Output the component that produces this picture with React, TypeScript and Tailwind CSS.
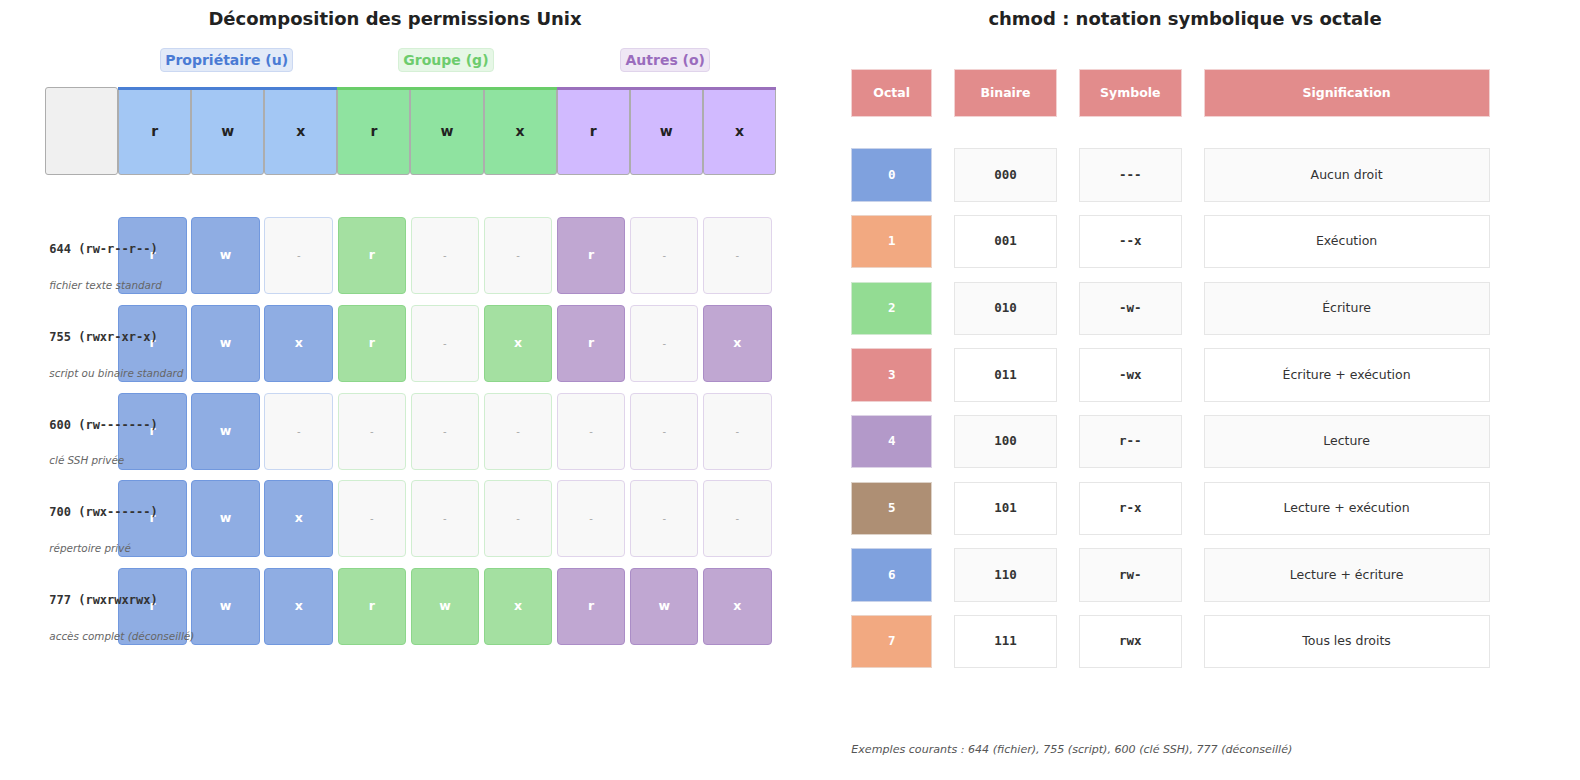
import React from 'react';

type Group = 'u' | 'g' | 'o';

const groups: { key: Group; label: string; letters: string[] }[] = [
  { key: 'u', label: 'Propriétaire (u)', letters: ['r', 'w', 'x'] },
  { key: 'g', label: 'Groupe (g)', letters: ['r', 'w', 'x'] },
  { key: 'o', label: 'Autres (o)', letters: ['r', 'w', 'x'] },
];

const pillStyles: Record<Group, string> = {
  u: 'bg-[#e2eaf8] border-[#cbd8f2] text-[#4a7bd4]',
  g: 'bg-[#e6f7e6] border-[#d6f0d6] text-[#6dcc6d]',
  o: 'bg-[#efe7f5] border-[#e0d4eb] text-[#9a6cbd]',
};

const headCell: Record<Group, string> = {
  u: 'bg-[#a3c7f4]',
  g: 'bg-[#8fe3a0]',
  o: 'bg-[#d1baff]',
};

const topLine: Record<Group, string> = {
  u: 'bg-[#4a7fd4]',
  g: 'bg-[#6acd6a]',
  o: 'bg-[#9a70bc]',
};

const onCell: Record<Group, string> = {
  u: 'bg-[#8fade3] border-[#7198de]',
  g: 'bg-[#a4e0a1] border-[#8dd68b]',
  o: 'bg-[#c0a7d2] border-[#ab8dc7]',
};

const offCell: Record<Group, string> = {
  u: 'bg-[#f8f8f8] border-[#c8d7f2]',
  g: 'bg-[#f8f8f8] border-[#d0eed0]',
  o: 'bg-[#f8f8f8] border-[#e0d4eb]',
};

const examples = [
  { mode: '644 (rw-r--r--)', desc: 'fichier texte standard', bits: 'rw-r--r--' },
  { mode: '755 (rwxr-xr-x)', desc: 'script ou binaire standard', bits: 'rwxr-xr-x' },
  { mode: '600 (rw-------)', desc: 'clé SSH privée', bits: 'rw-------' },
  { mode: '700 (rwx------)', desc: 'répertoire privé', bits: 'rwx------' },
  { mode: '777 (rwxrwxrwx)', desc: 'accès complet (déconseillé)', bits: 'rwxrwxrwx' },
];

const octals = [
  { n: '0', bin: '000', sym: '---', meaning: 'Aucun droit', color: 'bg-[#7fa1de] border-[#c9d3ea]' },
  { n: '1', bin: '001', sym: '--x', meaning: 'Exécution', color: 'bg-[#f2a981] border-[#ecd3c6]' },
  { n: '2', bin: '010', sym: '-w-', meaning: 'Écriture', color: 'bg-[#93dc93] border-[#cfe9cf]' },
  { n: '3', bin: '011', sym: '-wx', meaning: 'Écriture + exécution', color: 'bg-[#e28c8c] border-[#efd0d0]' },
  { n: '4', bin: '100', sym: 'r--', meaning: 'Lecture', color: 'bg-[#b399c9] border-[#ddd3e6]' },
  { n: '5', bin: '101', sym: 'r-x', meaning: 'Lecture + exécution', color: 'bg-[#ae8f74] border-[#ddd2c8]' },
  { n: '6', bin: '110', sym: 'rw-', meaning: 'Lecture + écriture', color: 'bg-[#7fa1de] border-[#c9d3ea]' },
  { n: '7', bin: '111', sym: 'rwx', meaning: 'Tous les droits', color: 'bg-[#f2a981] border-[#ecd3c6]' },
];

const groupOf = (i: number): Group => (i < 3 ? 'u' : i < 6 ? 'g' : 'o');

const PermissionBreakdown = () => (
  <div className="w-[790px] shrink-0">
    <h1 className="h-[36px] flex items-center justify-center text-[18px] font-bold text-[#222]">
      Décomposition des permissions Unix
    </h1>

    <div className="mt-[12px] h-[24px] flex pl-[117px]">
      {groups.map((g) => (
        <div key={g.key} className="w-[219.3px] flex justify-center">
          <span
            className={`h-[24px] px-[4px] flex items-center rounded-[4px] border text-[14px] font-bold ${pillStyles[g.key]}`}
          >
            {g.label}
          </span>
        </div>
      ))}
    </div>

    <div className="mt-[15.3px] h-[87.7px] flex pl-[45px]">
      <div className="w-[73.1px] h-full bg-[#f0f0f0] border-[1.5px] border-[#adadad] rounded-[3px]" />
      {groups.map((g) => (
        <div key={g.key} className="relative flex h-full">
          {g.letters.map((l) => (
            <div
              key={l}
              className={`w-[73.1px] h-full flex items-center justify-center border-[1.5px] border-[#adadad] rounded-[3px] text-[14px] font-bold text-[#222] ${headCell[g.key]}`}
            >
              {l}
            </div>
          ))}
          <div className={`absolute top-0 left-0 right-0 h-[3px] ${topLine[g.key]}`} />
        </div>
      ))}
    </div>

    <div className="mt-[42.3px] flex flex-col gap-[10.7px]">
      {examples.map((ex) => (
        <div key={ex.mode} className="h-[77px] flex pl-[45px]">
          <div className="relative z-10 w-[73.3px] shrink-0 pl-[4.3px] pt-[25px] whitespace-nowrap">
            <div className="h-[14px] leading-[14px] text-[12px] font-bold text-[#333] font-['DejaVu_Sans_Mono',monospace]">
              {ex.mode}
            </div>
            <div className="mt-[22.7px] h-[12px] leading-[12px] text-[10.4px] italic text-[#666]">
              {ex.desc}
            </div>
          </div>
          <div className="flex gap-[4.6px]">
            {ex.bits.split('').map((b, i) => {
              const g = groupOf(i);
              const on = b !== '-';
              return (
                <div
                  key={i}
                  className={`w-[68.5px] h-full flex items-center justify-center rounded-[4px] border-[1.5px] ${
                    on ? `${onCell[g]} text-white text-[12.5px] font-bold` : `${offCell[g]} text-[#aaa] text-[10px]`
                  }`}
                >
                  {on ? b : '-'}
                </div>
              );
            })}
          </div>
        </div>
      ))}
    </div>
  </div>
);

const OctalTable = () => (
  <div className="w-[790px] shrink-0">
    <h1 className="h-[36px] flex items-center justify-center text-[18px] font-bold text-[#222]">
      chmod : notation symbolique vs octale
    </h1>

    <div className="mt-[33px] pl-[61.3px]">
      <div className="grid grid-cols-[80.7px_103px_102.6px_286px] gap-x-[22px] h-[48px]">
        {['Octal', 'Binaire', 'Symbole', 'Signification'].map((h) => (
          <div
            key={h}
            className="flex items-center justify-center bg-[#e28c8c] border border-[#f2d2d2] text-white text-[12.5px] font-bold"
          >
            {h}
          </div>
        ))}
      </div>

      <div className="mt-[31.3px] flex flex-col gap-[13.4px]">
        {octals.map((o, i) => {
          const bg = i % 2 === 0 ? 'bg-[#fafafa]' : 'bg-white';
          return (
            <div key={o.n} className="grid grid-cols-[80.7px_103px_102.6px_286px] gap-x-[22px] h-[53.3px]">
              <div
                className={`flex items-center justify-center border text-white text-[12.5px] font-bold font-['DejaVu_Sans_Mono',monospace] ${o.color}`}
              >
                {o.n}
              </div>
              <div
                className={`flex items-center justify-center border border-[#e6e6e6] text-[#333] text-[12.5px] font-bold font-['DejaVu_Sans_Mono',monospace] ${bg}`}
              >
                {o.bin}
              </div>
              <div
                className={`flex items-center justify-center border border-[#e6e6e6] text-[#333] text-[12.5px] font-bold font-['DejaVu_Sans_Mono',monospace] ${bg}`}
              >
                {o.sym}
              </div>
              <div className={`flex items-center justify-center border border-[#e6e6e6] text-[#333] text-[12.5px] ${bg}`}>
                {o.meaning}
              </div>
            </div>
          );
        })}
      </div>

      <p className="mt-[74.5px] h-[13px] leading-[13px] text-[11.1px] italic text-[#555]">
        Exemples courants : 644 (fichier), 755 (script), 600 (clé SSH), 777 (déconseillé)
      </p>
    </div>
  </div>
);

export default function App() {
  return (
    <div className="w-[1580px] h-[780px] bg-white flex overflow-hidden font-['DejaVu_Sans',sans-serif]">
      <PermissionBreakdown />
      <OctalTable />
    </div>
  );
}
